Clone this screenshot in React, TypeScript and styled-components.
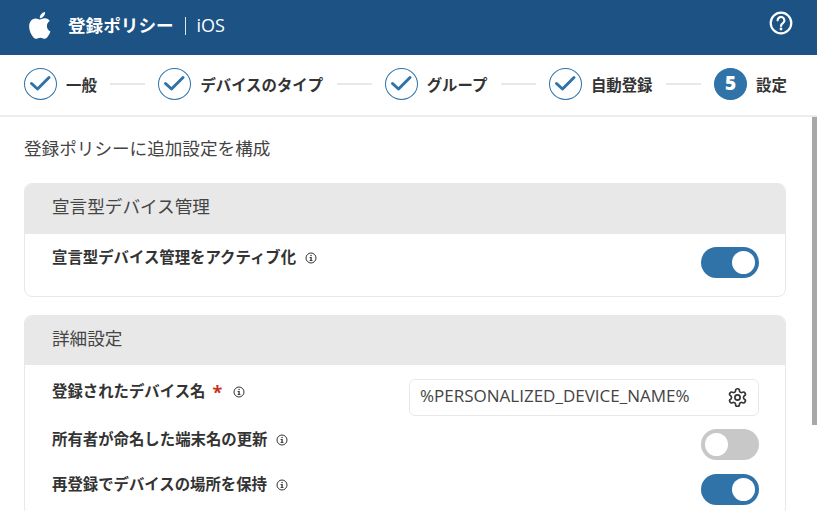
import React from "react";
import styled, { createGlobalStyle } from "styled-components";

const Global = createGlobalStyle`
  html, body { margin: 0; padding: 0; height: 100%; background: #fff; overflow: hidden; }
  #root { height: 100%; }
  * { box-sizing: border-box; }
  body { font-family: "Open Sans", "Noto Sans CJK JP", sans-serif; color: #333; }
`;

const Page = styled.div`
  height: 511px;
  display: flex;
  flex-direction: column;
  overflow: hidden;
  position: relative;
`;

const Header = styled.header`
  flex: none;
  height: 55px;
  background: #1d5284;
  color: #fff;
  display: flex;
  align-items: center;
  padding: 0 24px 0 28px;
`;

const Logo = styled.svg`
  width: 23px;
  height: 27px;
  fill: #fff;
  margin-right: 17px;
  margin-top: -4px;
`;

const Title = styled.div`
  font-size: 17.6px;
  font-weight: 700;
  margin-top: -6px;
`;

const Divider = styled.span`
  width: 1px;
  height: 18px;
  background: #fff;
  margin: -3px 11px 0 11px;
  opacity: 0.85;
`;

const Platform = styled.div`
  font-size: 18px;
  font-weight: 400;
  margin-top: -5px;
  flex: 1;
`;

const Help = styled.svg`
  width: 24px;
  height: 24px;
  margin-top: -9px;
`;

const Stepper = styled.nav`
  flex: none;
  height: 62px;
  border-bottom: 2px solid #ececec;
  display: flex;
  align-items: center;
  padding: 0 0 2px 24px;
`;

const Step = styled.div`
  display: flex;
  align-items: center;
  gap: 9px;
`;

const Circle = styled.div<{ $current?: boolean }>`
  width: 33px;
  height: 32px;
  border-radius: 50%;
  border: 1px solid #2f73a9;
  background: ${(p) => (p.$current ? "#2f73a9" : "#fff")};
  color: #fff;
  font-size: 19px;
  font-weight: 800;
  display: flex;
  align-items: center;
  justify-content: center;
  font-family: "Open Sans", sans-serif;
  line-height: 1;
  padding-bottom: 2px;
`;

const StepLabel = styled.span`
  font-size: 15.4px;
  font-weight: 700;
  color: #333;
  white-space: nowrap;
`;

const Line = styled.span`
  width: 35px;
  height: 2px;
  background: #e8e8e8;
  margin: 0 13.1px 0 13.5px;
`;

const Content = styled.main`
  flex: 1;
  padding: 20px 31px 0 24px;
  overflow: hidden;
`;

const Scroll = styled.div`
  position: absolute;
  right: 0;
  top: 117px;
  width: 5px;
  height: 308px;
  background: #a8a8a8;
`;

const Intro = styled.p`
  margin: 0 0 24px;
  font-size: 17.6px;
  line-height: 22px;
  color: #444;
`;

const Card = styled.section`
  border: 1px solid #e8e8e8;
  border-radius: 8px;
  margin-bottom: 18px;
  overflow: hidden;
`;

const CardHead = styled.h2<{ $h: number }>`
  margin: -1px -1px 0;
  height: ${(p) => p.$h}px;
  background: #e8e8e8;
  display: flex;
  align-items: center;
  padding: 0 0 6px 28px;
  font-size: 17.6px;
  font-weight: 400;
  color: #444;
`;

const CardBody = styled.div<{ $pt: number; $pb: number }>`
  padding: ${(p) => p.$pt}px 26px ${(p) => p.$pb}px 27px;
  display: flex;
  flex-direction: column;
`;

const Row = styled.div<{ $mb?: number; $h: number }>`
  display: flex;
  justify-content: space-between;
  align-items: flex-start;
  height: ${(p) => p.$h}px;
  margin-bottom: ${(p) => p.$mb ?? 0}px;
`;

const Label = styled.div<{ $top: number }>`
  display: flex;
  align-items: center;
  margin-top: ${(p) => p.$top}px;
  font-size: 15.4px;
  line-height: 20px;
  font-weight: 700;
  color: #333;
`;

const Star = styled.span`
  color: #c8321e;
  margin: 0 2px 0 7px;
  font-size: 18px;
  line-height: 20px;
`;

const Info = styled.svg`
  width: 12px;
  height: 12px;
  margin-left: 9px;
`;

const Switch = styled.div<{ $on?: boolean }>`
  flex: none;
  width: 58px;
  height: 31px;
  border-radius: 16px;
  background: ${(p) => (p.$on ? "#2f73a9" : "#c8c8c8")};
  padding: 4px 4px;
  display: flex;
  justify-content: ${(p) => (p.$on ? "flex-end" : "flex-start")};
`;

const Knob = styled.span`
  width: 23px;
  height: 23px;
  border-radius: 50%;
  background: #fff;
`;

const Field = styled.div`
  flex: none;
  width: 350px;
  height: 37px;
  border: 1px solid #e8e8e8;
  border-radius: 6px;
  display: flex;
  align-items: center;
  justify-content: space-between;
  padding: 0 10px 0 10px;
  font-size: 17px;
  color: #444;
`;

const FieldText = styled.span`
  margin-top: -4px;
`;

const Gear = styled.svg`
  width: 21px;
  height: 21px;
  fill: none;
  stroke: #333;
  stroke-width: 1.9;
  stroke-linecap: round;
  stroke-linejoin: round;
`;

const Check = () => (
  <svg width="33" height="32" viewBox="0 0 33 32" fill="none" style={{ margin: -1 }}>
    <path d="M7.5 16.5 L13.5 22 L25 10.5" stroke="#2f73a9" strokeWidth="3" strokeLinecap="round" strokeLinejoin="round" />
  </svg>
);

const InfoIcon = () => (
  <Info viewBox="0 0 12 12" fill="none">
    <circle cx="6" cy="6" r="5" stroke="#333" strokeWidth="1" />
    <rect x="5.4" y="5" width="1.3" height="3.6" fill="#333" />
    <rect x="4.6" y="5" width="1.5" height="0.9" fill="#333" />
    <rect x="4.6" y="8" width="2.9" height="0.9" fill="#333" />
    <rect x="5.4" y="2.9" width="1.3" height="1.2" fill="#333" />
  </Info>
);

const Toggle = ({ on }: { on?: boolean }) => (
  <Switch $on={on}>
    <Knob />
  </Switch>
);

const steps = ["一般", "デバイスのタイプ", "グループ", "自動登録"];

export default function App() {
  return (
    <Page>
      <Global />
      <Header>
        <Logo viewBox="3.6 3 16.4 18.2" preserveAspectRatio="none">
          <path d="M17.05 20.28c-.98.95-2.05.8-3.08.35-1.09-.46-2.09-.48-3.24 0-1.44.62-2.2.44-3.06-.35C2.79 15.25 3.51 7.59 9.05 7.31c1.35.07 2.29.74 3.08.8 1.18-.24 2.31-.93 3.57-.84 1.51.12 2.65.72 3.4 1.8-3.12 1.87-2.38 5.98.48 7.13-.57 1.5-1.31 2.99-2.54 4.09zM12.03 7.25c-.15-2.23 1.66-4.07 3.74-4.25.29 2.58-2.34 4.5-3.74 4.25z" />
        </Logo>
        <Title>登録ポリシー</Title>
        <Divider />
        <Platform>iOS</Platform>
        <Help viewBox="0 0 24 24" fill="none">
          <circle cx="12" cy="12" r="10.3" stroke="#fff" strokeWidth="2.2" />
          <path d="M8.6 9.3a3.4 3.4 0 1 1 5.3 2.9c-1.2.8-1.9 1.3-1.9 2.8" stroke="#fff" strokeWidth="2.2" strokeLinecap="round" />
          <circle cx="12" cy="18" r="1.4" fill="#fff" />
        </Help>
      </Header>
      <Stepper>
        {steps.map((s) => (
          <React.Fragment key={s}>
            <Step>
              <Circle>
                <Check />
              </Circle>
              <StepLabel>{s}</StepLabel>
            </Step>
            <Line />
          </React.Fragment>
        ))}
        <Step>
          <Circle $current>5</Circle>
          <StepLabel>設定</StepLabel>
        </Step>
      </Stepper>
      <Content>
        <Intro>登録ポリシーに追加設定を構成</Intro>
        <Card>
          <CardHead $h={51}>宣言型デバイス管理</CardHead>
          <CardBody $pt={13} $pb={18}>
            <Row $h={31}>
              <Label $top={1}>
                宣言型デバイス管理をアクティブ化
                <InfoIcon />
              </Label>
              <Toggle on />
            </Row>
          </CardBody>
        </Card>
        <Card>
          <CardHead $h={50}>詳細設定</CardHead>
          <CardBody $pt={14} $pb={10}>
            <Row $h={37} $mb={13}>
              <Label $top={3}>
                登録されたデバイス名
                <Star>*</Star>
                <InfoIcon />
              </Label>
              <Field>
                <FieldText>%PERSONALIZED_DEVICE_NAME%</FieldText>
                <Gear viewBox="0 0 24 24">
                  <path d="M12.22 2h-.44a2 2 0 0 0-2 2v.18a2 2 0 0 1-1 1.73l-.43.25a2 2 0 0 1-2 0l-.15-.08a2 2 0 0 0-2.73.73l-.22.38a2 2 0 0 0 .73 2.73l.15.1a2 2 0 0 1 1 1.72v.51a2 2 0 0 1-1 1.74l-.15.09a2 2 0 0 0-.73 2.73l.22.38a2 2 0 0 0 2.73.73l.15-.08a2 2 0 0 1 2 0l.43.25a2 2 0 0 1 1 1.73V20a2 2 0 0 0 2 2h.44a2 2 0 0 0 2-2v-.18a2 2 0 0 1 1-1.73l.43-.25a2 2 0 0 1 2 0l.15.08a2 2 0 0 0 2.73-.73l.22-.39a2 2 0 0 0-.73-2.73l-.15-.08a2 2 0 0 1-1-1.74v-.5a2 2 0 0 1 1-1.74l.15-.09a2 2 0 0 0 .73-2.73l-.22-.38a2 2 0 0 0-2.73-.73l-.15.08a2 2 0 0 1-2 0l-.43-.25a2 2 0 0 1-1-1.73V4a2 2 0 0 0-2-2z" />
                  <circle cx="12" cy="12" r="3" />
                </Gear>
              </Field>
            </Row>
            <Row $h={31} $mb={14}>
              <Label $top={1}>
                所有者が命名した端末名の更新
                <InfoIcon />
              </Label>
              <Toggle />
            </Row>
            <Row $h={31}>
              <Label $top={1}>
                再登録でデバイスの場所を保持
                <InfoIcon />
              </Label>
              <Toggle on />
            </Row>
          </CardBody>
        </Card>
      </Content>
      <Scroll />
    </Page>
  );
}
